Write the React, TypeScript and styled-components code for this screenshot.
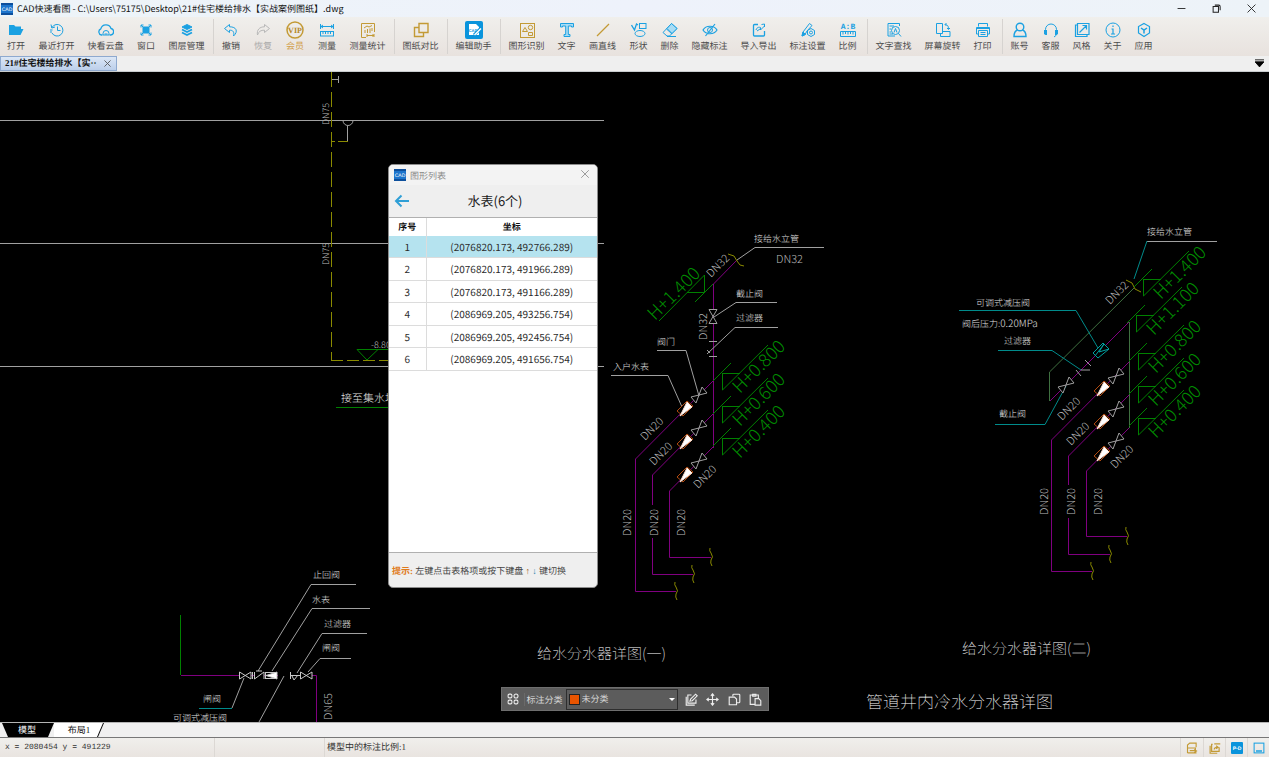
import React from "react";
import styled, { createGlobalStyle, css } from "styled-components";

const SANS = `"Noto Sans CJK SC", "Noto Sans", sans-serif`;
const SONG = `"Liberation Serif", "Noto Sans CJK SC", serif`;
const BLUE = "#1ba1e2";
const GOLD = "#c39a35";

const GlobalStyle = createGlobalStyle`
  * { box-sizing: border-box; }
  body {
    margin: 0;
    font-family: ${SANS};
    color: #222;
    overflow: hidden;
    text-rendering: geometricPrecision;
  }
  button, select { font: inherit; color: inherit; text-rendering: inherit; }
  button { padding: 0; border: 0; background: none; }
`;

/* ---------- window frame ---------- */

const Window = styled.div`
  display: flex;
  flex-direction: column;
  height: 100vh;
`;

const TitleBar = styled.header`
  display: flex;
  align-items: center;
  height: 17px;
  padding-left: 1px;
  background: linear-gradient(90deg, #edf4f8, #eef2fb 50%, #edf3f8);
  flex: none;
`;

const WindowTitle = styled.h1`
  flex: 1;
  margin: 0 0 0 4px;
  font-size: 9px;
  font-weight: 400;
  line-height: 16px;
  color: #111;
  white-space: nowrap;
`;

const WindowButton = styled.button`
  display: flex;
  align-items: center;
  justify-content: center;
  width: 35px;
  height: 17px;
`;

/* ---------- ribbon ---------- */

const Toolbar = styled.nav`
  display: flex;
  height: 39px;
  flex: none;
  background: linear-gradient(#f0efec, #e8e2de);
`;

const ToolGroup = styled.div<{ $dense?: boolean }>`
  --pair: ${(p) => (p.$dense ? "31px" : "32px")};
  display: flex;
  padding-right: ${(p) => (p.$dense ? "2px" : "0")};

  &:not(:first-child)::before {
    content: "";
    width: 1px;
    margin: 2px 1px 2px 2px;
    background: #d6d3d0;
  }
`;

const ToolButton = styled.button<{ $chars: number; $tone?: string }>`
  display: flex;
  flex-direction: column;
  align-items: center;
  gap: 1px;
  width: ${(p) => (p.$chars === 2 ? "var(--pair)" : p.$chars === 3 ? "41px" : "49px")};
  padding-top: 5px;
  font-family: ${SONG};
  font-size: 9px;
  line-height: 14px;
  white-space: nowrap;
  color: ${(p) => p.$tone ?? "#4c4c4c"};
`;

const IconSlot = styled.span`
  display: flex;
  align-items: center;
  height: 16px;
`;

/* ---------- document tabs ---------- */

const DocStrip = styled.div`
  display: flex;
  justify-content: space-between;
  height: 16px;
  flex: none;
  background: #efefef;
  border-bottom: 1px solid #c8ccce;
`;

const DocTab = styled.div`
  display: flex;
  align-items: center;
  justify-content: space-between;
  width: 117px;
  padding: 0 5px 0 4px;
  border: 1px solid #8ea9cf;
  background: linear-gradient(#dce7f6, #bccfea);
  font-family: ${SONG};
  font-size: 9px;
  font-weight: 700;
  line-height: 13px;
  white-space: nowrap;
  color: #111;

  button { display: flex; }
`;

const StripButton = styled.button`
  display: flex;
  align-items: center;
  margin-right: 5px;
`;

/* ---------- drawing area ---------- */

const Canvas = styled.main`
  position: relative;
  flex: 1;
  min-height: 0;
  overflow: hidden;
  background: #000;
`;

const Drawing = styled.svg`
  display: block;
  width: 100%;
  height: 100%;
  fill: none;
  stroke-width: 1;

  text {
    stroke: none;
    font-family: "Noto Sans CJK SC", sans-serif;
    font-weight: 300;
  }
  .thin { font-weight: 100; }
`;

/* ---------- shape list dialog ---------- */

const Dialog = styled.section`
  position: absolute;
  left: 388px;
  top: 92px;
  display: flex;
  flex-direction: column;
  width: 210px;
  height: 424px;
  border: 1px solid #8c8c8c;
  border-radius: 5px;
  background: #efefef;
  overflow: hidden;
`;

const DialogTitle = styled.div`
  display: flex;
  align-items: center;
  gap: 4px;
  height: 20px;
  padding: 0 7px 0 5px;
  background: #f3f3f3;
  font-size: 9px;
  color: #8b8b8b;

  span { flex: 1; }
`;

const DialogHead = styled.div`
  display: grid;
  grid-template-columns: 26px 1fr 22px;
  align-items: center;
  height: 33px;
  border-bottom: 1px solid #b0b0b0;
  text-align: center;

  button { display: flex; justify-content: center; }
  h2 {
    margin: 0;
    font-size: 13px;
    font-weight: 400;
    line-height: 20px;
    color: #1b1b1b;
  }
`;

const DialogBody = styled.div`
  flex: 1;
  background: #fff;
  border-bottom: 1px solid #b0b0b0;
`;

const CoordTable = styled.table`
  width: 100%;
  height: 153px;
  border-collapse: collapse;
  table-layout: fixed;
  font-size: 10px;
  line-height: 14px;
  text-align: center;
  color: #2b2b2b;

  th, td { padding: 0; }
  th {
    height: 18px;
    font-size: 9px;
    font-weight: 700;
    font-family: ${SONG};
    color: #111;
  }
  th:first-child { width: 37px; }
  th:first-child, td:first-child { border-right: 1px solid #dcdcdc; }
`;

const CoordRow = styled.tr<{ $selected: boolean }>`
  border-bottom: 1px solid #dcdcdc;
  ${(p) => p.$selected && css`background: #b5e3ef;`}
`;

const DialogHint = styled.p`
  height: 34px;
  margin: 0;
  padding: 0 3px;
  font-family: ${SONG};
  font-size: 9px;
  line-height: 36px;
  white-space: nowrap;
  color: #444;

  strong { color: #e07b1c; }
  em { font-style: normal; font-weight: 700; color: #a0601c; }
  em + em { color: #1f7fa8; }
`;

/* ---------- floating annotation bar ---------- */

const AnnotationBar = styled.div`
  position: absolute;
  left: 50%;
  bottom: 11px;
  display: flex;
  align-items: center;
  width: 268px;
  height: 24px;
  padding: 0 1px 0 5px;
  transform: translateX(-50%);
  border: 1px solid #6e6e6e;
  background: #5c5c5c;
  font-family: ${SONG};
  font-size: 9px;
  color: #d8d8d8;

  label { width: 42px; padding-left: 2px; margin-left: 5px; border-left: 1px solid #6a6a6a; white-space: nowrap; }
  button { display: flex; justify-content: center; flex: 1; }
`;

const CategoryBox = styled.div`
  display: flex;
  align-items: center;
  width: 112px;
  height: 21px;
  margin-right: 3px;
  padding: 0 2px;
  border: 1px solid #2e2e2e;

  select {
    flex: 1;
    min-width: 0;
    padding: 0 0 0 2px;
    border: 0;
    background: transparent;
    appearance: none;
    outline: none;
  }
`;

const Swatch = styled.i`
  width: 11px;
  height: 11px;
  border: 1px solid #222;
  background: #e95400;
`;

const Caret = styled.i`
  border: 3px solid transparent;
  border-top-color: #fff;
  border-bottom: 0;
`;

/* ---------- layout tabs and status bar ---------- */

const LayoutTabs = styled.div`
  display: flex;
  height: 16px;
  flex: none;
  background: #f0f0f0;
  border-top: 1px solid #b4b4b4;
  border-bottom: 1px solid #777;
`;

const LayoutTab = styled.button<{ $active?: boolean }>`
  position: relative;
  height: 14px;
  font-family: ${SONG};
  font-size: 9px;
  line-height: 14px;
  background: #000;
  ${(p) =>
    p.$active
      ? css`
          width: 54px;
          color: #fff;
          clip-path: polygon(2px 0, 100% 0, calc(100% - 6px) 100%, 8px 100%);
        `
      : css`
          z-index: 0;
          width: 50px;
          color: #111;
          clip-path: polygon(0 0, 100% 0, calc(100% - 6px) 100%, 0 100%);

          &::before {
            content: "";
            position: absolute;
            inset: 0 1px 0 -7px;
            z-index: -1;
            background: #fff;
            clip-path: polygon(7px 0, 100% 0, calc(100% - 6px) 100%, 1px 100%);
          }
        `}
`;

const StatusBar = styled.footer`
  display: flex;
  align-items: stretch;
  height: 19px;
  flex: none;
  background: linear-gradient(#f0efec, #e9e4e0);
  font-family: ${SONG};
  font-size: 9px;
  line-height: 18px;
  color: #333;
`;

const StatusCell = styled.div<{ $width?: number; $mono?: boolean }>`
  ${(p) => (p.$width ? `width: ${p.$width}px;` : "flex: 1;")}
  padding-left: ${(p) => (p.$mono ? "5px" : "2px")};
  border-right: 1px solid #dcd8d4;
  ${(p) => p.$mono && css`font-family: "Liberation Mono", monospace; font-size: 8px; line-height: 20px;`}
`;

const StatusButton = styled.button`
  display: flex;
  align-items: center;
  justify-content: center;
  width: 22px;

  & + & { border-left: 1px solid #dcd8d4; }
`;

/* ---------- icons ---------- */

type IconProps = { size?: number; color?: string; children: React.ReactNode };
const Icon = ({ size = 16, color = BLUE, children }: IconProps) => (
  <svg width={size} height={size} viewBox="0 0 16 16" fill="none" stroke={color} strokeWidth="1" aria-hidden="true">
    {children}
  </svg>
);

const Logo = ({ size = 12 }: { size?: number }) => (
  <svg width={size} height={size} viewBox="0 0 12 12" aria-hidden="true">
    <rect width="12" height="12" fill="#1c74cc" />
    <path d="M0 0H12V2H0ZM0 10H12V12H0Z" fill="#0d4f9c" />
    <text x="6" y="8" textAnchor="middle" fontSize="5" fontFamily="Liberation Sans" fill="#fff">CAD</text>
  </svg>
);

type Tool = { label: string; icon: React.ReactNode; color?: string; tone?: string };

const groups: { dense?: boolean; tools: Tool[] }[] = [
  {
    tools: [
      { label: "打开", icon: <path d="M1 13V3H6L7.500 4.500H13V7H4.500L1.500 13ZM4.500 7H15.500L12.500 13H1.500Z" fill={BLUE} stroke="none" /> },
      { label: "最近打开", icon: <><path d="M3 5.500A5.800 5.800 0 1 1 3 11M2 2.500L2.800 6L6 5" /><path d="M8.500 4.500V8.500H11.500" /><path d="M1 8H3.500M1 10H3" /></> },
      { label: "快看云盘", icon: <><path d="M4.500 13H3.500A3.200 3.200 0 0 1 2.800 6.900A5.300 5.300 0 0 1 13 6.500A3.300 3.300 0 0 1 12.800 13H11.500" strokeWidth="1.300" /><path d="M5 13V11.500A3 3 0 0 1 11 11.500V13ZM6.500 12H9.500" /></> },
      { label: "窗口", icon: <><rect x="5" y="5" width="6" height="6" fill={BLUE} /><path d="M3 5.500V3H5.500M10.500 3H13V5.500M13 10.500V13H10.500M5.500 13H3V10.500M3 3L5 5M13 3L11 5M13 13L11 11M3 13L5 11" /></> },
      { label: "图层管理", icon: <><path d="M8 2.500L13 5L8 7.500L3 5Z" fill={BLUE} /><path d="M3 7.500L8 10L13 7.500M3 10.500L8 13L13 10.500" strokeWidth="1.800" /></> },
    ],
  },
  {
    tools: [
      { label: "撤销", icon: <path d="M6.500 2.500L1.500 6.500L6.500 10.500V8.200C10 8 11.500 10 10.500 14C15.500 9.500 13.500 4.700 6.500 4.800Z" /> },
      { label: "恢复", color: "#b8b8b8", tone: "#aaa", icon: <path d="M9.500 2.500L14.500 6.500L9.500 10.500V8.200C6 8 3.500 9.500 2.500 13C1.500 8 4.500 4.800 9.500 4.800Z" /> },
      { label: "会员", color: GOLD, tone: "#d2a14c", icon: null },
      { label: "测量", icon: <><path d="M1.500 2V7M14.500 2V7M2 4.500H14M4 3L2 4.500L4 6M12 3L14 4.500L12 6" /><rect x="1.500" y="9.500" width="13" height="4.500" /><path d="M4 10V12M6.500 10V12M9 10V12M11.500 10V12" /></> },
      { label: "测量统计", color: GOLD, icon: <><path d="M6 15.500H1.500V1.500H14.500V10" /><path d="M4 6L7 4L9 5L12 3.500M5 8V11M7.500 7V11M10 6.500V11M12 6V9M7 13.500H14M7 12V15M14 12V15M12.500 12.500L14 13.500L12.500 14.500" /></> },
    ],
  },
  { tools: [{ label: "图纸对比", color: GOLD, icon: <path d="M6 1.500H15V10.500H6ZM5.500 5.500H1.500V14.500H10.500V11" strokeWidth="1.400" /> }] },
  { tools: [{ label: "编辑助手", icon: null }] },
  {
    dense: true,
    tools: [
      { label: "图形识别", color: GOLD, icon: <><rect x="1.500" y="1.500" width="14" height="14" /><path d="M3.500 9.500L6 5.500L8.500 9.500ZM9.500 10.500H13.500V13.500H9.500Z" /><circle cx="11.500" cy="5.500" r="2.200" /></> },
      { label: "文字", icon: <path d="M1.500 1.500H14.500V5H12.500V4H9.300V12.500H11V14.500H5V12.500H6.700V4H3.500V5H1.500Z" fill="#a9dcf4" /> },
      { label: "画直线", color: GOLD, icon: <path d="M2 14L14 2" strokeWidth="1.300" /> },
      { label: "形状", icon: <><rect x="8.500" y="1.500" width="6.500" height="5" /><ellipse cx="9" cy="11.500" rx="5" ry="3" /><path d="M.5 3L3.500 8L5.500 2L7 3" strokeWidth="1.300" /></> },
      { label: "删除", icon: <><path d="M9.500 1.500L15 6.500L7.500 14H5L1 10.500ZM4.500 7L10 12M5 14.500H14" /><path d="M9.500 1.500L15 6.500L10 11.500L5 6.500Z" fill="#a9dcf4" /></> },
      { label: "隐藏标注", icon: <><path d="M1 8C4 3 12 3 15 8C12 13 4 13 1 8ZM13 2L3.500 14" strokeWidth="1.200" /><circle cx="8" cy="8" r="2.500" /></> },
      { label: "导入导出", icon: <><path d="M7 2.500H3.500Q2.500 2.500 2.500 3.500V13Q2.500 14 3.500 14H12.500Q13.500 14 13.500 13V9" strokeWidth="1.300" /><path d="M5 8C6 5 8 5 9.500 5.500V8L13.500 4M10.500 2.500L13.500 2V5M6 9L9 7" /></> },
      { label: "标注设置", icon: <><path d="M9.500 1.500L12 3.500L7 9L5 12.500L2 14L3 10Z" /><path d="M2 14L3 10L5.500 12.500Z" fill={BLUE} /><path d="M11 6.500L14.500 8.500V12.500L11 14.500L7.500 12.500V8.500Z" /><circle cx="11" cy="10.500" r="1.500" /></> },
      { label: "比例", icon: null },
    ],
  },
  {
    dense: true,
    tools: [
      { label: "文字查找", icon: <><path d="M13.500 4V1.500H2V14H9M3.500 4H8M3.500 7H5M3.500 10H5M3.500 12H7" /><circle cx="9.500" cy="8.500" r="4" /><path d="M12.500 11.500L15 14.500M8 10.500L9.500 6.500L11 10.500" /></> },
      { label: "屏幕旋转", icon: <><path d="M1.500 1.500H7.500V11.500H1.500ZM8 9.500H15V14.500H5.500V12M10 2.500C12 2.500 13.500 3.500 13.500 7M11.500 1L10 2.500L11.500 4M12 6L13.500 7.500L15 6" /></> },
      { label: "打印", icon: <><path d="M3.500 4.500V1.500H12.500V4.500M3.500 12H1.500V5.500H14.500V12H12.500M3.500 8.500H12.500V14.500H3.500ZM5.500 10.500H10.500M5.500 12.500H10.500M1.500 6.500H14.500" /></> },
    ],
  },
  {
    dense: true,
    tools: [
      { label: "账号", icon: <><circle cx="8" cy="5" r="3.800" strokeWidth="1.400" /><path d="M5.500 8C3 9 2 11 2 14.500H14C14 11 13 9 10.500 8" strokeWidth="1.400" /></> },
      { label: "客服", icon: <><path d="M2.500 9V7.500A5.500 5.500 0 0 1 13.500 7.500V9" /><path d="M1 8H4V13H2.500L1 12ZM12 8H15V12L13.500 13H12Z" fill={BLUE} stroke="none" /><path d="M13.500 13L11 15" /></> },
      { label: "风格", icon: <path d="M3.500 1.500H15V12.500H3.500ZM3.500 3H1.500V14.500H13V12.500M5.500 10.500L12.500 3.500M8.500 3.500H12.500V7.500" strokeWidth="1.200" /> },
      { label: "关于", icon: <><circle cx="8" cy="8" r="7" /><path d="M8 3.500V5M6.500 7H8V12M6 12H10" strokeWidth="1.200" /></> },
      { label: "应用", icon: <><path d="M8 1.500L13.500 4.500V11L8 14.500L2.500 11V4.500Z" strokeWidth="1.200" /><path d="M5 6L8 8L11 6M8 8V11.500" strokeWidth="1.500" /></> },
    ],
  },
];

const VipIcon = () => (
  <svg width="18" height="18" viewBox="0 0 18 18" aria-hidden="true">
    <circle cx="9" cy="9" r="8" fill="none" stroke={GOLD} strokeWidth="1.500" />
    <text x="9" y="12" textAnchor="middle" fontSize="8" fontWeight="700" fontFamily="Liberation Serif" fill="#b5872a">VIP</text>
  </svg>
);

const AssistantIcon = () => (
  <svg width="18" height="18" viewBox="0 0 18 18" aria-hidden="true">
    <rect width="18" height="18" rx="2" fill="#0a94dc" />
    <path d="M4 3H11L14 6V14H4Z" fill="#fff" />
    <text x="8" y="11" textAnchor="middle" fontSize="4" fontWeight="700" fontFamily="Liberation Sans" fill="#0a94dc">CAD</text>
    <path d="M9 14L16 7" stroke="#0a94dc" strokeWidth="3" />
    <path d="M9.500 14L16 7.500" stroke="#fff" strokeWidth="1.500" />
  </svg>
);

const RatioIcon = () => (
  <svg width="16" height="16" viewBox="0 0 16 16" fill="none" stroke={BLUE} aria-hidden="true">
    <text x="8" y="7" textAnchor="middle" fontSize="8" fontWeight="700" fontFamily="Liberation Mono" fill={BLUE} stroke="none">A:B</text>
    <path d="M.5 9.500H15.500V14.500H.5ZM3 10V12.500M5.500 10V12M8 10V12.500M10.500 10V12M13 10V12.500" />
  </svg>
);

const special: Record<string, React.ReactNode> = {
  会员: <VipIcon />,
  编辑助手: <AssistantIcon />,
  比例: <RatioIcon />,
};

/* ---------- drawing symbols ---------- */

const GREY = "#a0a0a0";
const PURPLE = "#800080";
const GREEN = "#008000";
const OLIVE = "#8a8a00";
const TEAL = "#008b8b";

type At = { x: number; y: number };

const Note = ({ x, y, size = 9, children }: At & { size?: number; children: React.ReactNode }) => (
  <text x={x} y={y} fontSize={size} fill="#e0e0e0">{children}</text>
);

const Pipe = ({ x, y, angle = 0, size = 11, children }: At & { angle?: number; size?: number; children: string }) => (
  <text transform={`translate(${x} ${y}) rotate(${angle})`} fontSize={size} fill="#b8b8b8">{children}</text>
);

const Level = ({ x, y, children }: At & { children: string }) => (
  <text transform={`translate(${x} ${y}) rotate(-45)`} fontSize="18" fill="#008c00">{children}</text>
);

const Elevation = ({ x, y, children }: At & { children: string }) => (
  <g transform={`translate(${x} ${y})`} stroke={GREEN}>
    <path d="M-9 8L9 -10M0 0.500H18M0.500 0V17L46 -28" />
    <Level x={18} y={21}>{children}</Level>
  </g>
);

const Valve = ({ x, y }: At) => (
  <path transform={`translate(${x} ${y})`} d="M-8 2L-3 8L3 -8L8 -2Z" fill="#000" stroke={GREY} />
);

const Meter = ({ x, y }: At) => (
  <g transform={`translate(${x} ${y})`}>
    <path d="M-8 2L2 -8L8 -3L-2 7Z" stroke="#b04a10" fill="#000" />
    <path d="M-5 7L2 -7L7 -2Z" fill="#fff" stroke="#ffe0d0" />
  </g>
);

const Break = ({ x, y }: At) => (
  <path transform={`translate(${x} ${y})`} d="M-1 -9Q-2 -6 0 -4Q3 0 0 3Q-1 6 1 9" stroke={OLIVE} />
);

const RiserDetail = () => (
  <g stroke={GREY}>
    <path d="M0 120.500H604M0 243.500H604M0 366.500H604" />
    <path d="M331.500 72V361" stroke={OLIVE} strokeDasharray="15 5" />
    <path d="M332 79.500H338M338.500 76V83M343 120.500A5 5 0 0 0 353 120.500M347.500 126V141" />
    <path d="M332 141.500H335M338 141.500H348M331 360.500H389" stroke={OLIVE} strokeDasharray="12 4" />
    <path d="M357 349.500H389M357 349.500L367 360L378 349.500M336 407.500H389" stroke={GREEN} />
    <Pipe x={329} y={125} angle={-90} size={9}>DN75</Pipe>
    <Pipe x={329} y={265} angle={-90} size={9}>DN75</Pipe>
    <Pipe x={371} y={348} size={9}>-8.80</Pipe>
    <Note x={341} y={402} size={11}>接至集水坑</Note>
  </g>
);

const InletDetail = () => (
  <g stroke={GREY}>
    <path d="M180.500 615V675" stroke={GREEN} />
    <path d="M181 675.500H278M290 675.500H316.500V722" stroke={PURPLE} />
    <path d="M356 584.500H311L258 671M370 608.500H312L272 671M367 633.500H322L297 673M351 658.500H320L308 672M232 708L244 678M284 676L259 722" />
    <path d="M199 708.500H232" stroke={TEAL} />
    <g fill="#000" stroke="#c8c8c8">
      <path d="M239.500 672V679L251 672V679ZM254.500 672V679L264 672V679M252.500 672V679M256 671H262M300.500 672V679L312 672V679ZM290.500 672V679M290 675.500H300M292 676L294 680L298 675" />
      <rect x="265.500" y="672.500" width="11" height="6" />
      <path d="M266 675.500L277 672V679Z" fill="#fff" />
    </g>
    <Note x={313} y={578}>止回阀</Note>
    <Note x={312} y={603}>水表</Note>
    <Note x={324} y={627}>过滤器</Note>
    <Note x={322} y={651}>闸阀</Note>
    <Note x={203} y={702}>闸阀</Note>
    <Note x={173} y={721}>可调式减压阀</Note>
    <Pipe x={332} y={720} angle={-90}>DN65</Pipe>
  </g>
);

const ManifoldOne = () => (
  <g stroke={GREY}>
    <path d="M737 260L713.500 284V448M713 381L635.500 459V591.500H676M713 414L652.500 475V505M652.500 538V574.500H693M713 447L669.500 491V557.500H711" stroke={PURPLE} />
    <path d="M824 247.500H755L737 260M777 302.500H736L714 317M778 327.500H735L707 354M657 350.500H686L699 396M611 375.500H668L682 407" />
    <path d="M728 254L734 256L737 261L740 265L744 266" stroke={OLIVE} />
    <path d="M709 309.500H717L709 323.500H717Z" fill="#000" />
    <path d="M709 341.500H717M709 356.500H717M707 350L710 353" />
    <path d="M659 321L704.500 275V292.500H687M695 302L713 284" stroke={GREEN} />
    <Level x={655} y={321}>H+1.400</Level>
    <Elevation x={722} y={373}>H+0.800</Elevation>
    <Elevation x={722} y={406}>H+0.600</Elevation>
    <Elevation x={722} y={438}>H+0.400</Elevation>
    {[0, 33, 66].map((dy) => (
      <g key={dy}>
        <Valve x={699} y={395 + dy} />
        <Meter x={685} y={409 + dy} />
      </g>
    ))}
    <Break x={676} y={591} />
    <Break x={693} y={574} />
    <Break x={711} y={557} />
    <Note x={754} y={242}>接给水立管</Note>
    <Note x={736} y={297}>截止阀</Note>
    <Note x={736} y={321}>过滤器</Note>
    <Note x={657} y={345}>阀门</Note>
    <Note x={613} y={370}>入户水表</Note>
    <Pipe x={776} y={263}>DN32</Pipe>
    <Pipe x={711} y={278} angle={-45}>DN32</Pipe>
    <Pipe x={707} y={340} angle={-90}>DN32</Pipe>
    <Pipe x={645} y={441} angle={-45}>DN20</Pipe>
    <Pipe x={654} y={466} angle={-45}>DN20</Pipe>
    <Pipe x={698} y={489} angle={-45}>DN20</Pipe>
    <Pipe x={631} y={536} angle={-90}>DN20</Pipe>
    <Pipe x={658} y={536} angle={-90}>DN20</Pipe>
    <Pipe x={685} y={536} angle={-90}>DN20</Pipe>
    <text className="thin" x="537" y="659" fontSize="15" fill="#fff">给水分水器详图(一)</text>
  </g>
);

const ManifoldTwo = () => (
  <g stroke={GREY}>
    <path d="M1134 288L1049.500 372V401M1129.500 322V428" stroke="#3f7040" />
    <path d="M1129 322L1050 401M1129 362L1051.500 440V571.500H1092M1129 395L1068.500 456V485M1068.500 518V554.500H1110M1129 428L1086.500 471V536.500H1127" stroke={PURPLE} />
    <path d="M1147 241.500H1217" />
    <path d="M1147 241L1134 279M959 310.500H1076L1098 348M998 350.500H1052L1081 370M995 424.500H1045L1066 386" stroke={TEAL} />
    <path d="M1126 280L1132 283L1135 289L1141 292" stroke={OLIVE} />
    <path d="M1093 353L1103 343L1109 349L1098 358ZM1095 356L1104 344L1099 352L1109 349" stroke="#00a0a0" fill="#000" />
    <path d="M1076 370L1081 376M1085 360L1091 366M1081 370H1090" />
    <Valve x={1066} y={385} />
    {[0, 33, 65].map((dy) => (
      <g key={dy}>
        <Valve x={1116} y={376 + dy} />
        <Meter x={1102} y={389 + dy} />
      </g>
    ))}
    <Elevation x={1143} y={279}>H+1.400</Elevation>
    <Elevation x={1136} y={315}>H+1.100</Elevation>
    <Elevation x={1138} y={353}>H+0.800</Elevation>
    <Elevation x={1138} y={386}>H+0.600</Elevation>
    <Elevation x={1138} y={418}>H+0.400</Elevation>
    <Break x={1092} y={571} />
    <Break x={1110} y={554} />
    <Break x={1127} y={536} />
    <Note x={1147} y={235}>接给水立管</Note>
    <Note x={976} y={306}>可调式减压阀</Note>
    <Note x={962} y={327}>阀后压力:<tspan fontSize="10">0.20MPa</tspan></Note>
    <Note x={1004} y={344}>过滤器</Note>
    <Note x={999} y={417}>截止阀</Note>
    <Pipe x={1110} y={305} angle={-45}>DN32</Pipe>
    <Pipe x={1062} y={421} angle={-45}>DN20</Pipe>
    <Pipe x={1071} y={446} angle={-45}>DN20</Pipe>
    <Pipe x={1115} y={469} angle={-45}>DN20</Pipe>
    <Pipe x={1048} y={515} angle={-90}>DN20</Pipe>
    <Pipe x={1075} y={515} angle={-90}>DN20</Pipe>
    <Pipe x={1102} y={515} angle={-90}>DN20</Pipe>
    <text className="thin" x="962" y="654" fontSize="15" fill="#fff">给水分水器详图(二)</text>
    <text className="thin" x="866" y="708" fontSize="17" fill="#fff">管道井内冷水分水器详图</text>
  </g>
);

const coordinates = [
  "(2076820.173, 492766.289)",
  "(2076820.173, 491966.289)",
  "(2076820.173, 491166.289)",
  "(2086969.205, 493256.754)",
  "(2086969.205, 492456.754)",
  "(2086969.205, 491656.754)",
];

const ShapeList = () => (
  <Dialog role="dialog" aria-label="图形列表">
    <DialogTitle>
      <Logo />
      <span>图形列表</span>
      <button aria-label="关闭">
        <Icon size={10} color="#888"><path d="M2 2L14 14M14 2L2 14" strokeWidth="1.300" /></Icon>
      </button>
    </DialogTitle>
    <DialogHead>
      <button aria-label="返回">
        <Icon color="#2f9fd6"><path d="M15 8H3M7.500 2.500L2 8L7.500 13.500" strokeWidth="2" /></Icon>
      </button>
      <h2>水表(6个)</h2>
    </DialogHead>
    <DialogBody>
      <CoordTable>
        <thead>
          <tr><th>序号</th><th>坐标</th></tr>
        </thead>
        <tbody>
          {coordinates.map((c, i) => (
            <CoordRow key={c} $selected={i === 0}>
              <td>{i + 1}</td>
              <td>{c}</td>
            </CoordRow>
          ))}
        </tbody>
      </CoordTable>
    </DialogBody>
    <DialogHint>
      <strong>提示:</strong> 左键点击表格项或按下键盘<em> ↑ </em><em>↓ </em>键切换
    </DialogHint>
  </Dialog>
);

const LIGHT = "#ededed";

export default function App() {
  return (
    <Window>
      <GlobalStyle />
      <TitleBar>
        <Logo />
        <WindowTitle>CAD快速看图 - C:\Users\75175\Desktop\21#住宅楼给排水【实战案例图纸】.dwg</WindowTitle>
        <WindowButton aria-label="最小化"><Icon size={9} color="#222"><path d="M1 8H15" strokeWidth="1.600" /></Icon></WindowButton>
        <WindowButton aria-label="还原">
          <Icon size={9} color="#222"><path d="M5 2H12Q14.500 2 14.500 5V11M2 4.500H11.500V14.500H2Z" strokeWidth="1.800" /></Icon>
        </WindowButton>
        <WindowButton aria-label="关闭"><Icon size={9} color="#222"><path d="M1 1L15 15M15 1L1 15" strokeWidth="1.600" /></Icon></WindowButton>
      </TitleBar>

      <Toolbar>
        {groups.map((g, i) => (
          <ToolGroup key={i} $dense={g.dense}>
            {g.tools.map((t) => (
              <ToolButton key={t.label} $chars={t.label.length} $tone={t.tone}>
                <IconSlot>{special[t.label] ?? <Icon color={t.color}>{t.icon}</Icon>}</IconSlot>
                {t.label}
              </ToolButton>
            ))}
          </ToolGroup>
        ))}
      </Toolbar>

      <DocStrip>
        <DocTab>
          21#住宅楼给排水【实··
          <button aria-label="关闭图纸"><Icon size={7} color="#555"><path d="M1 1L15 15M15 1L1 15" strokeWidth="2" /></Icon></button>
        </DocTab>
        <StripButton aria-label="图纸列表">
          <Icon size={9} color="#000"><path d="M0 1.500H16M0 5H16L8 14Z" fill="#000" strokeWidth="1.500" /></Icon>
        </StripButton>
      </DocStrip>

      <Canvas>
        <Drawing role="img" aria-label="给水分水器详图">
          <g transform="translate(0 -72)">
            <RiserDetail />
            <InletDetail />
            <ManifoldOne />
            <ManifoldTwo />
          </g>
        </Drawing>

        <ShapeList />

        <AnnotationBar>
          <Icon size={12} color={LIGHT}>
            <rect x="1.500" y="1.500" width="5" height="5" rx="1.500" strokeWidth="1.400" />
            <circle cx="12" cy="4" r="2.700" strokeWidth="1.400" />
            <rect x="1.500" y="9.500" width="5" height="5" rx="1.500" strokeWidth="1.400" />
            <rect x="9.500" y="9.500" width="5" height="5" rx="1.500" strokeWidth="1.400" />
          </Icon>
          <label htmlFor="category">标注分类</label>
          <CategoryBox>
            <Swatch />
            <select id="category" defaultValue="none">
              <option value="none">未分类</option>
            </select>
            <Caret />
          </CategoryBox>
          <button aria-label="编辑">
            <Icon size={13} color={LIGHT}><path d="M8 2.500H3.500V12.500H13.500V8M1.500 4.500V15H12M6 10L7 7.500L13 1.500L15 3.500L9 9.500Z" strokeWidth="1.400" /></Icon>
          </button>
          <button aria-label="移动">
            <Icon size={13} color={LIGHT}><path d="M8 1V15M1 8H15M6 3.500L8 1L10 3.500M6 12.500L8 15L10 12.500M3.500 6L1 8L3.500 10M12.500 6L15 8L12.500 10" strokeWidth="1.400" /></Icon>
          </button>
          <button aria-label="复制">
            <Icon size={13} color={LIGHT}><path d="M6 4V2.500Q6 1.500 7 1.500H13.500Q14.500 1.500 14.500 2.500V11Q14.500 12 13.500 12H11M1.500 5H8L10.500 7.500V14.500H1.500Z" strokeWidth="1.400" /></Icon>
          </button>
          <button aria-label="粘贴">
            <Icon size={13} color={LIGHT}><path d="M7 14H1.500V2.500H11.500V6M4.500 1.500H8.500V4H4.500ZM7.500 7H12L14.500 9.500V15H7.500Z" strokeWidth="1.400" /></Icon>
          </button>
        </AnnotationBar>
      </Canvas>

      <LayoutTabs>
        <LayoutTab $active>模型</LayoutTab>
        <LayoutTab>布局1</LayoutTab>
      </LayoutTabs>

      <StatusBar>
        <StatusCell $width={215} $mono>x = 2080454 y = 491229</StatusCell>
        <StatusCell $width={110} />
        <StatusCell>模型中的标注比例:1</StatusCell>
        <StatusButton aria-label="导出图片">
          <Icon size={12} color={GOLD}>
            <path d="M2 14.500V4L5 1.500H13.500V7M2 14.500H14M2 8H12.500V11.500H5M11 10L14 12L11 14" strokeWidth="1.500" />
          </Icon>
        </StatusButton>
        <StatusButton aria-label="导出PDF">
          <Icon size={12} color={GOLD}>
            <path d="M5 3H3.500V12.500H13.500V7M1.500 5V15H11M7 10Q7 7 11 7M9.500 5L12 7L9.500 9M7 2.500H15" strokeWidth="1.600" />
          </Icon>
        </StatusButton>
        <StatusButton aria-label="PDF转换">
          <svg width="12" height="12" viewBox="0 0 12 12" aria-hidden="true">
            <rect width="12" height="12" rx="1" fill="#0a94dc" />
            <text x="6" y="8" textAnchor="middle" fontSize="5" fontWeight="700" fontFamily="Liberation Sans" fill="#fff">P-D</text>
          </svg>
        </StatusButton>
        <StatusButton aria-label="命令行">
          <Icon size={12}><rect x="1.500" y="1.500" width="13" height="13" strokeWidth="1.400" /><path d="M4 12H12" strokeWidth="2" /></Icon>
        </StatusButton>
      </StatusBar>
    </Window>
  );
}
